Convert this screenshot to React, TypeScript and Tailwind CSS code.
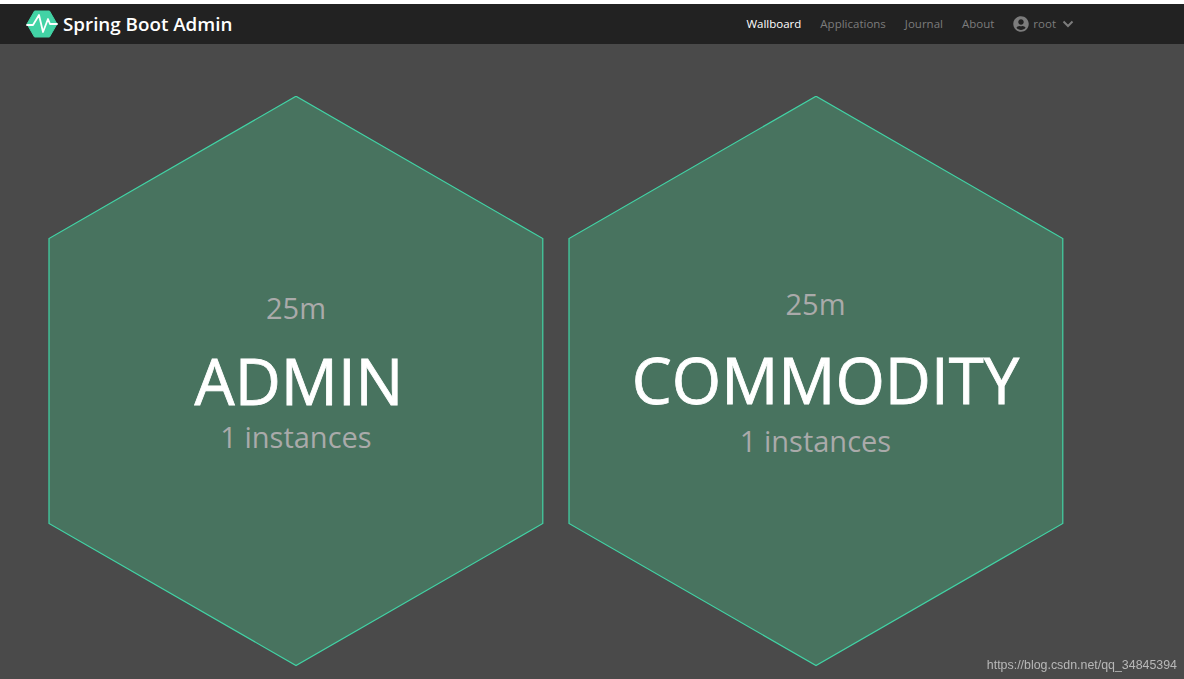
function Logo() {
  return (
    <svg width="32" height="28" viewBox="0 0 32 28" className="shrink-0">
      <polygon points="1,14 8.5,1 23.5,1 31,14 23.5,27 8.5,27" fill="#42d3a5" stroke="#42d3a5" strokeLinejoin="round" />
      <path d="M1 15h6l6-10 4 17 5-13 2 5h7" fill="none" stroke="#fff" strokeWidth="1.8" strokeLinejoin="round" strokeLinecap="round" />
    </svg>
  );
}

function Hexagon({ children }: { children: React.ReactNode }) {
  return (
    <div className="relative w-[496px] h-[571px] shrink-0">
      <svg width="496" height="571" viewBox="0 0 496 571" className="absolute inset-0">
        <polygon points="248,0.200 494.800,142.500 494.800,427.500 248,569.500 1,427.500 1,142.500" fill="#48735f" stroke="#42d3a5" strokeWidth="1.2" />
      </svg>
      <div className="relative flex flex-col items-center h-full text-center">{children}</div>
    </div>
  );
}

export default function App() {
  return (
    <div className="relative w-[1184px] h-[679px] overflow-hidden bg-[#4a4a4a] font-['Open_Sans',sans-serif]">
      <div className="h-[4px] bg-white" />
      <nav className="h-[40px] bg-[#222222] flex items-center pl-[26px] pr-[110px]">
        <Logo />
        <span className="ml-[5px] text-[18.800px] font-semibold text-white">Spring Boot Admin</span>
        <div className="ml-auto flex items-center gap-[19px] text-[11.500px] text-[#7c7c7c]">
          <a className="text-white font-medium">Wallboard</a>
          <a>Applications</a>
          <a>Journal</a>
          <a>About</a>
          <div className="flex items-center gap-[4px]">
            <svg width="16" height="16" viewBox="0 0 496 512" fill="#7c7c7c">
              <path d="M248 8C111 8 0 119 0 256s111 248 248 248 248-111 248-248S385 8 248 8zm0 96c48.600 0 88 39.400 88 88s-39.400 88-88 88-88-39.400-88-88 39.400-88 88-88zm0 344c-58.700 0-111.300-26.600-146.500-68.200 18.800-35.400 55.600-59.800 98.500-59.800 2.400 0 4.800.4 7.100 1.100 13 4.200 26.600 6.900 40.900 6.900 14.300 0 28-2.700 40.900-6.900 2.300-.7 4.700-1.100 7.100-1.100 42.900 0 79.700 24.400 98.500 59.800C359.300 421.400 306.700 448 248 448z" />
            </svg>
            <span>root</span>
            <svg width="12" height="12" viewBox="0 0 12 12" className="ml-[2px]" fill="none" stroke="#7c7c7c" strokeWidth="2">
              <path d="M1.500 3.500 6 8l4.500-4.500" />
            </svg>
          </div>
        </div>
      </nav>
      <main className="flex gap-[23.500px] pl-[48px] pt-[52px]">
        <Hexagon>
          <div className="mt-[192px] text-[29px] leading-[40px] text-[#aaaaaa]">25m</div>
          <div className="mt-[25px] ml-[6px] text-[63.500px] font-medium leading-[56px] text-white [-webkit-text-stroke:0.8px_white]">ADMIN</div>
          <div className="mt-[11px] text-[29px] leading-[34px] text-[#aaaaaa]">1 instances</div>
        </Hexagon>
        <Hexagon>
          <div className="mt-[188px] text-[29px] leading-[40px] text-[#aaaaaa]">25m</div>
          <div className="mt-[28px] ml-[20px] text-[63.500px] font-medium leading-[56px] text-white whitespace-nowrap [-webkit-text-stroke:0.8px_white]">COMMODITY</div>
          <div className="mt-[16px] text-[29px] leading-[34px] text-[#aaaaaa]">1 instances</div>
        </Hexagon>
      </main>
      <div className="absolute right-[7px] bottom-[6px] text-[12.400px] leading-[16px] text-[#b8b8b8] blur-[0.3px] font-['Liberation_Sans',sans-serif]">
        https://blog.csdn.net/qq_34845394
      </div>
    </div>
  );
}
